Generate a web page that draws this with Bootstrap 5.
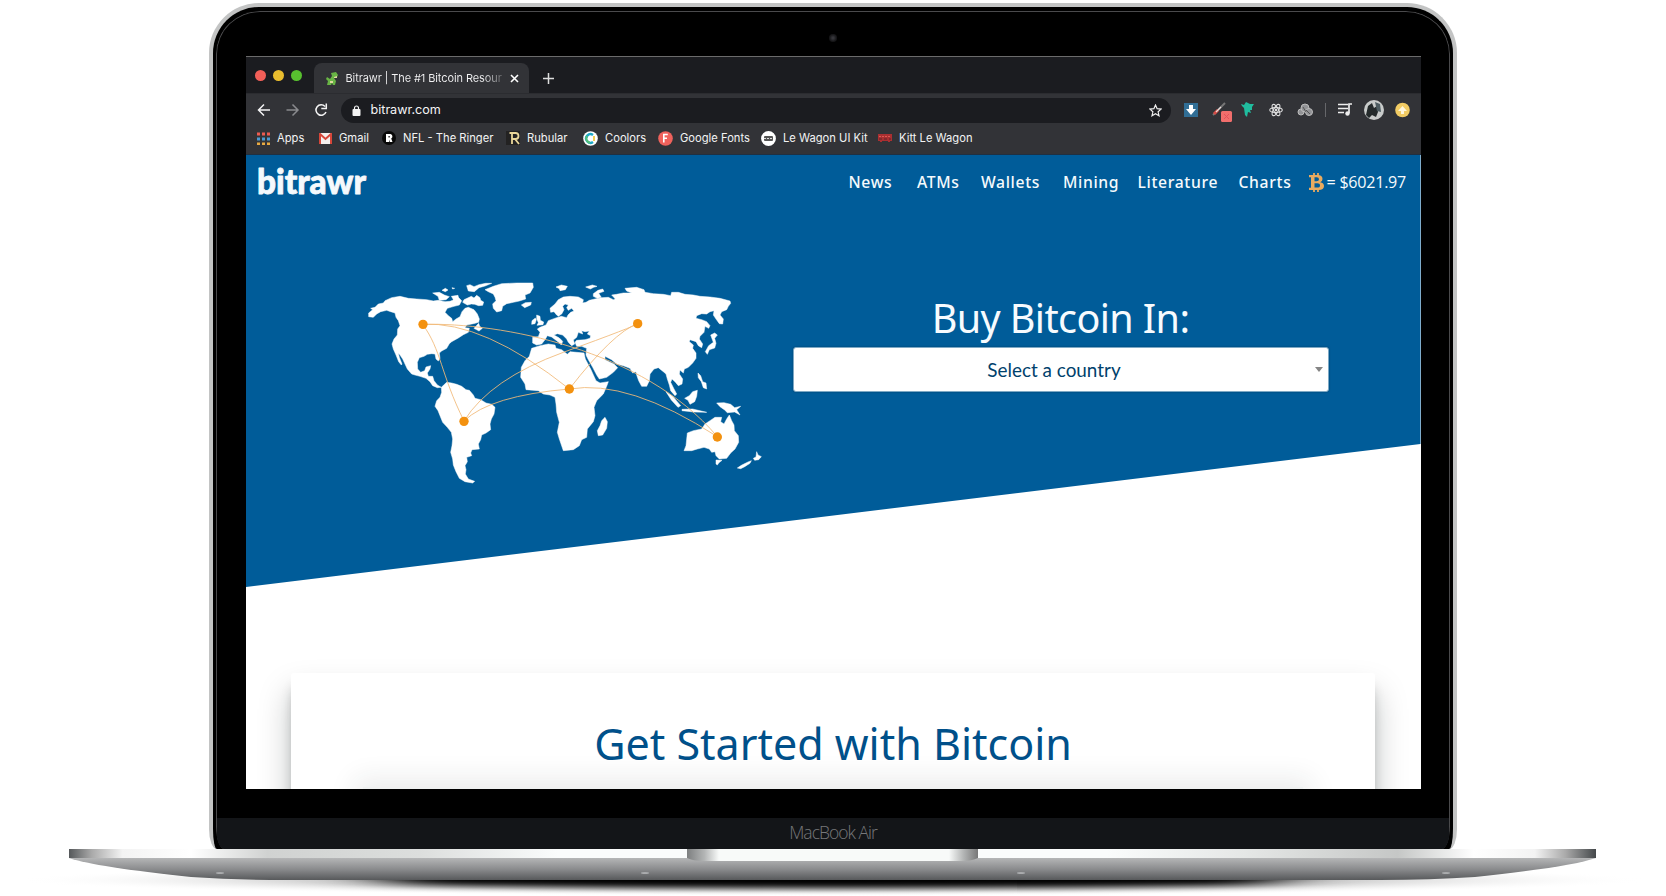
<!DOCTYPE html>
<html lang="en">
<head>
<meta charset="utf-8">
<title>Bitrawr on a laptop</title>
<meta name="viewport" content="width=device-width, initial-scale=1">
<link href="https://cdn.jsdelivr.net/npm/bootstrap@5.3.0/dist/css/bootstrap.min.css" rel="stylesheet">
<script src="https://cdn.jsdelivr.net/npm/bootstrap@5.3.0/dist/js/bootstrap.bundle.min.js" defer></script>
<style>
body{width:1666px;height:896px;background:#fff;font-family:Inter,"Liberation Sans",sans-serif}
svg{display:block;flex:none}
.lid{width:1248px;height:846px;margin-top:3px;border:4px solid #c3c4c4;border-bottom:0;border-radius:50px 50px 8px 8px / 50px 50px 20px 20px;background:#000}
.lid-edge{margin:1px 1px 0;height:841px;border:solid #000;border-width:3px 2px 0;border-radius:46px 46px 10px 10px / 46px 46px 22px 22px;overflow:hidden;box-shadow:inset 0 0 0 1px #4a4a4c}
.cam{width:8px;height:8px;border-radius:50%;background:radial-gradient(#35353a 15%,#161618 60%);margin:23px auto 14px}
.screen-area{width:1175px;height:733px;border-top:1px solid #6b6b6b}
.chin{height:31px;margin:29px 1px 0;background:#131518;color:#77787a;font:300 17.5px/29px "Open Sans",sans-serif;letter-spacing:-1px}
.tabs-row{height:36px;background:#1b1c20}
.light{width:11px;height:11px;border-radius:50%}
.page-tab{width:215px;height:30px;background:#323337;border-radius:8px 8px 0 0;color:#f1f1f2;font-size:11px;letter-spacing:-.1px;padding:0 10px 0 12px}
.tab-title{width:160px;white-space:nowrap;background:linear-gradient(90deg,#f4f4f5 85%,#6a6b6e 97%);-webkit-background-clip:text;background-clip:text;color:transparent}
.tools{height:33px;background:#323337;padding:0 10px 0 11px;border-top:1px solid #2b2c30}
.omni{width:830px;height:25px;border-radius:13px;background:#1b1c20;color:#f4f4f5;font-size:12.6px;padding:0 9px 0 11px}
.marks{height:29px;background:#323337;border-bottom:1px solid #1f3042;color:#f3f3f4;font-size:11.2px;font-weight:400;grid-template-columns:62px 63px 124px 77px 75px 103px 117px 120px;padding:2px 0 0 11px}
.marks div{display:flex;align-items:center;gap:7.500px;white-space:nowrap;height:20px}
.site{height:634px;background:#fff}
.hero{width:1175px;height:433px;background:#005c99;clip-path:polygon(0 0,100% 0,100% 289px,0 432px)}
.site-nav{height:54px;padding-left:8px}
.menu{grid-template-columns:68.5px 64px 82px 74.5px 101px 70px 112px;font:500 15.7px/24px "Noto Sans",sans-serif;letter-spacing:.65px;color:#f5fafd;white-space:nowrap}
.price{font:400 16.1px/24px "Open Sans",sans-serif;letter-spacing:-.25px}
.map{margin:60px 0 0 104px}
.buy{width:536px;margin:85px 0 0 13px}
.buy h1{font:400 39.5px/48px "Noto Sans",sans-serif;letter-spacing:-.6px;color:#f7fbfe;margin:0 0 5px}
.pick{height:45px;border:1px solid #7da8c4;border-radius:3px;background:#fff;color:#00416c;font:400 18.9px/43px Lato,sans-serif;box-shadow:0 0 2px #00416c}
.start{width:1084px;height:300px;margin:85px auto 0;background:#fff;border-radius:3px;box-shadow:0 20px 32px rgba(0,20,20,.25),0 12px 12px -4px rgba(0,10,10,.3);padding-top:43px}
.start h2{font:400 43px/56px "Noto Sans",sans-serif;color:#00508a;margin:0 0 15px}
.inner{width:940px;height:160px;background:#eff1f1;box-shadow:0 0 26px 8px rgba(30,40,40,.09)}
</style>
</head>
<body class="overflow-hidden m-0">
<div class="d-flex flex-column align-items-center">
<div class="lid"><div class="lid-edge">
  <div class="cam"></div>
  <div class="screen-area mx-auto overflow-hidden">
    <div class="tabs-row d-flex align-items-end">
      <div class="d-flex align-self-center" style="gap:7px;padding:0 0 0 9.500px;margin-right:11.500px">
        <span class="light" style="background:#f25f58"></span><span class="light" style="background:#e9bd2e"></span><span class="light" style="background:#58c02f"></span>
      </div>
      <div class="page-tab d-flex align-items-center">
        <svg width="12" height="13" viewBox="0 0 12 13"><path d="M5 1l5-1 2 3-1 2-3 1 2 3-1 4H7l-1-2-1 2H1L2 9 0 7l1-2 3 2 2-3z" fill="#69b445"/><path d="M8 5l3-1v2H8zM4 9h3v2H4z" fill="#ded8a0"/></svg>
        <span class="tab-title ms-2">Bitrawr | The #1 Bitcoin Resour</span>
        <svg class="ms-auto" width="9" height="9" viewBox="0 0 9 9"><path d="M1 1l7 7M8 1L1 8" stroke="#fff" stroke-width="1.6"/></svg>
      </div>
      <svg style="margin:0 0 9px 14px" width="11" height="11" viewBox="0 0 11 11"><path d="M0 5.500H11M5.500 0V11" stroke="#ddd" stroke-width="1.500"/></svg>
    </div>
    <div class="tools d-flex align-items-center">
      <svg width="84" height="14" viewBox="0 0 84 14" fill="none" stroke="#f4f4f4" stroke-width="1.500"><path d="M13 7H2M7 1.500L1.500 7 7 12.500"/><path stroke="#898a8d" d="M29.500 7h11M35.500 1.500L41 7l-5.500 5.500"/><path d="M68 3.500A5.200 5.200 0 1 0 69 9M69.300.5v5h-5"/></svg>
      <div class="omni d-flex align-items-center">
        <svg width="9" height="11" viewBox="0 0 9 11"><rect y="4" x=".5" width="8" height="7" rx="1" fill="#f4f4f4"/><path d="M2.500 5V3a2 2 0 0 1 4 0v2" fill="none" stroke="#f4f4f4" stroke-width="1.200"/></svg>
        <span style="margin-left:10px">bitrawr.com</span>
        <svg class="ms-auto" width="13" height="13" viewBox="0 0 13 13"><path d="M6.500 1l1.600 3.700 4 .4-3 2.700.9 3.900-3.500-2-3.500 2 .9-3.900-3-2.700 4-.4z" fill="none" stroke="#eee" stroke-width="1.200"/></svg>
      </div>
      <svg class="ms-auto" width="228" height="24" viewBox="0 0 228 24">
        <rect x="1" y="5" width="14" height="14" fill="#316e95"/><path d="M6 7h4v4h3l-5 6-5-6h3z" fill="#fff"/>
        <path d="M30 17L42 5" stroke="#777" stroke-width="2"/><path d="M31 16l4-4" stroke="#d64b45" stroke-width="3"/><path d="M33 14l5-5" stroke="#e8dcd8" stroke-width="1.300"/><rect x="38" y="13" width="11" height="11" rx="1.500" fill="#f16e6c"/><path d="M41 16l5 5M46 16l-5 5" stroke="#e2525a"/>
        <path d="M58 6l3 1 2-3 4 2 4 0-2 3 0 3-2 0 1 3-3-1-1 5-2-2-1-7-2-2z" fill="#20bd9f"/>
        <g fill="none" stroke="#ddd" stroke-width="1.100"><ellipse cx="93" cy="12" rx="6.300" ry="2.400"/><ellipse cx="93" cy="12" rx="6.300" ry="2.400" transform="rotate(60 93 12)"/><ellipse cx="93" cy="12" rx="6.300" ry="2.400" transform="rotate(120 93 12)"/></g><circle cx="93" cy="12" r="1.300" fill="#ddd"/>
        <g fill="#929396" stroke="#bbb"><circle cx="118" cy="14" r="3"/><circle cx="122" cy="10" r="4"/><circle cx="126" cy="14" r="3.500"/></g><path d="M123 12l4 4M120 9l3 5" stroke="#555"/>
        <path d="M142.500 5v14" stroke="#66676a"/>
        <path d="M155 6.500h10M155 10.500h10M155 14.500h6M166 15V6h3" stroke="#eee" stroke-width="1.700" fill="none"/><circle cx="164.500" cy="15.500" r="2.200" fill="#eee"/>
        <circle cx="191" cy="12" r="10" fill="#c8cbca"/><path d="M185 8l4-3 2 5 3-2 1 6-2 5-4-2-3 3-3-3z" fill="#242a2b"/><path d="M192 4l5 2 1 8-4-1z" fill="#4c5b60"/>
        <circle cx="219.500" cy="12" r="7.300" fill="#f2cc64"/><path d="M218 16v-3h-3l4.500-5 4.500 5h-3v3z" fill="#fff7dc"/>
      </svg>
    </div>
    <div class="marks d-grid align-items-start">
      <div><svg width="13" height="13" viewBox="0 0 13 13"><path d="M0 2h13" stroke="#ed5c50" stroke-width="3" stroke-dasharray="3 2"/><path d="M0 7h13" stroke="#4b9bd2" stroke-width="3" stroke-dasharray="3 2"/><path d="M0 12h13" stroke="#e8aa42" stroke-width="3" stroke-dasharray="3 2"/></svg>Apps</div>
      <div><svg width="13" height="11" viewBox="0 0 13 11"><rect width="13" height="11" rx="1" fill="#f3efed"/><path d="M1 11V1l5.500 5L12 1v10" fill="none" stroke="#d64639" stroke-width="2"/></svg>Gmail</div>
      <div><svg width="14" height="14" viewBox="0 0 14 14"><circle cx="7" cy="7" r="7" fill="#080808"/><path d="M4 3h4.500a2.500 2.500 0 0 1 .7 4.600L10.500 11H7.800L7 8.500V11H4zM6.500 5v1.500h1.200V5z" fill="#fff"/></svg>NFL - The Ringer</div>
      <div><svg width="14" height="14" viewBox="0 0 14 14"><path d="M0 0h14v14H0z" fill="#232222"/><path d="M6 13V2h3.500q3 0 3 3t-3 3H6m3 0l4 5M3.500 2H7" fill="none" stroke="#ead79a" stroke-width="1.800"/></svg>Rubular</div>
      <div><svg width="15" height="15" viewBox="0 0 15 15"><circle cx="7.500" cy="7.500" r="7.300" fill="#fff"/><path d="M10 4a4.300 4.300 0 1 0 0 7" fill="none" stroke="#20a9c5" stroke-width="2.500"/><path d="M4 5a4.300 4.300 0 0 0 3 6.700" fill="none" stroke="#55bf75" stroke-width="2"/><path d="M11 5v5" stroke="#f2cf52" stroke-width="2"/></svg>Coolors</div>
      <div><svg width="15" height="15" viewBox="0 0 15 15"><circle cx="7.500" cy="7.500" r="7.300" fill="#f0625c"/><path d="M5.800 11.500v-8h4M5.800 7.300H9" fill="none" stroke="#fff" stroke-width="1.600"/></svg>Google Fonts</div>
      <div><svg width="15" height="15" viewBox="0 0 15 15"><circle cx="7.500" cy="7.500" r="7.400" fill="#fff"/><rect x="3" y="5" width="9" height="5" rx="1" fill="#555"/><path d="M3 7.500h9" stroke="#ddd" stroke-dasharray="2 1"/></svg>Le Wagon UI Kit</div>
      <div><svg width="14" height="10" viewBox="0 0 14 10"><path d="M0 1h14v7h-2v1h-2V8H4v1H2V8H0z" fill="#a92f31"/><path d="M1 3.500h12" stroke="#dc5952" stroke-dasharray="2 1"/><path d="M1 6h12" stroke="#5d2428" stroke-dasharray="3 2"/></svg>Kitt Le Wagon</div>
    </div>
    <div class="site">
      <div class="hero">
        <nav class="site-nav d-flex align-items-center justify-content-between">
          <svg width="120" height="46" viewBox="-4 -6 120 46"><text x="-1" y="28.500" font-family="Lato" font-weight="900" font-size="34" fill="#f5f9fc" stroke="#f5f9fc" stroke-width=".8" stroke-linejoin="round" textLength="109" lengthAdjust="spacingAndGlyphs">bitrawr</text></svg>
          <div class="menu d-grid"><span>News</span><span>ATMs</span><span>Wallets</span><span>Mining</span><span>Literature</span><span>Charts</span>
            <span class="price d-flex align-items-center"><svg style="margin-right:3px" width="15" height="19" viewBox="0 0 15 19"><path d="M0 2h8.500q5 0 5 4 0 2.500-2.300 3.200Q15 10 15 13q0 4-5.500 4H0v-2.200h2V4.200H0zm5.500 2.300v3.900h2q2.500 0 2.500-2t-2.500-1.900zm0 6v4.300H8q3 0 3-2.200t-3-2.100z" fill="#e9ab60" fill-rule="evenodd"/><path d="M5 0v3M9 0v3M5 16v3M9 16v3" stroke="#e9ab60" stroke-width="1.800"/></svg>= $6021.97</span></div>
        </nav>
        <div class="d-flex">
        <svg class="map" width="430" height="225" viewBox="0 0 1290 675">
          <g fill="#fff" stroke="#fff" stroke-width="1.500" stroke-linejoin="round">
            <path d="M56 132L68 122 62 118 75 115 85 105 100 102 105 95 125 86 150 82 175 88 200 90 230 92 250 96 265 94 285 98 300 97 310 93 318 82 328 88 335 95 328 108 312 112 292 118 285 130 295 140 305 148 308 158 318 150 330 143 336 128 345 118 355 115 372 122 382 135 388 150 386 160 370 164 350 168 345 176 358 178 355 190 340 197 325 207 305 218 298 224 290 238 275 246 268 252 270 268 265 276 258 270 255 255 245 254 232 256 222 262 208 266 202 280 203 300 212 310 224 305 228 294 242 290 240 300 232 312 235 322 248 322 252 335 262 348 274 355 262 356 248 350 240 338 228 328 210 322 195 318 185 315 172 300 165 285 158 270 150 258 145 252 148 265 156 285 154 288 146 278 138 258 130 240 126 225 132 210 142 198 143 180 150 170 145 155 138 145 135 132 122 128 110 124 92 128 80 135 70 145 56 143z"/>
            <path d="M274 355L290 340 305 342 320 346 335 352 348 362 358 364 370 378 375 388 392 392 408 402 425 406 435 415 432 435 424 450 420 465 422 482 408 492 395 498 392 512 385 525 388 540 366 542 362 552 365 560 350 565 352 578 345 590 348 602 346 615 355 630 374 637 368 642 345 638 328 628 318 608 310 588 308 570 302 550 306 530 308 510 304 490 292 475 278 460 270 440 264 425 255 412 260 395 270 385 275 370z"/>
            <path d="M405 62L430 52 455 44 500 42 548 42 550 55 540 72 525 78 527 90 508 96 490 100 470 104 458 112 455 125 440 129 430 118 428 105 438 95 435 85 430 75 415 68z"/>
            <path d="M248 72l20-2 15 8 15 5-10 9-20 2-4-12zM276 64l10-6 8 5-8 5zM304 82l20-3 2 10-15 4zM306 56l8 2-6 2zM350 50l10-3 12 6 15-6 20-4 18 0-20 8-18 5-14 12-18-2zM338 100l4-8 22-10 8 5 8-8 10 7 2 8 9 5-3 10-12 1-12-4-10-1-12 3zM372 178l14-15 3 9 8 6-10 8zM514 108l12-7 18-1-2 8-18 8zM560 138l10 4 1 12 10 5-2 8-18 2 4-8-5-12zM546 155l10-8 3 5-4 12-10 2zM618 54l16-6 18 4-6 10-16 3-2-6z"/>
            <g transform="translate(600)">
            <path d="M-52 205L-35 203-30 190-38 180-30 175-12 168-5 155 20 146 34 142 50 146 54 138 62 130 72 126 65 118 55 124 50 116 55 108 45 105 38 112 42 122 35 135 25 142 20 138 12 128 2 130 0 118 15 105 25 92 40 84 60 82 85 84 100 92 98 102 108 100 118 94 135 90 155 86 175 85 190 92 196 90 185 78 200 76 220 72 245 72 230 66 225 58 260 55 282 62 285 70 310 74 340 76 362 80 365 70 385 70 405 76 430 78 450 82 480 84 510 88 540 96 542 103 535 112 530 122 515 128 510 138 520 150 518 165 508 164 498 150 490 138 492 125 480 128 470 135 455 134 440 140 438 148 455 152 470 158 480 170 476 178 465 172 462 190 450 202 448 210 458 225 455 236 445 230 438 218 420 212 418 218 430 228 428 238 438 252 438 268 428 282 415 295 403 300 400 312 390 303 388 315 398 330 396 345 385 350 375 338 366 330 362 340 372 360 380 375 375 380 362 365 358 348 352 330 348 315 340 308 325 296 312 300 300 315 298 335 290 352 275 352 266 335 260 318 258 308 248 312 240 298 220 290 200 285 185 272 165 262 165 272 180 280 192 285 203 296 190 310 170 325 148 330 140 318 128 295 115 272 108 258 110 238 95 232 80 232 75 220 80 214 105 212 120 208 122 200 112 195 118 186 105 188 95 185 98 195 85 190 80 205 70 213 74 225 65 230 55 220 50 210 38 198 22 194 12 198 28 207 38 217 34 228 24 218 5 204-8 200-15 212-25 225-40 228-52 222z"/>
            <path d="M-55 238L-30 230-5 225 15 228 18 238 35 242 52 256 60 248 80 250 102 252 106 270 122 300 138 335 150 342 175 338 170 352 160 375 140 395 132 415 135 440 130 458 112 480 110 505 95 512 88 530 70 542 40 545 28 510 22 490 28 460 20 430 18 405 15 385 0 378-20 375-35 365-72 362-75 345-88 325-86 295-75 275-62 262z"/>
            <path d="M165 445l7 13-2 20-12 20-13 2-3-15 8-15 5-15zM402 545L408 530 412 492 430 485 455 480 465 465 480 455 495 445 515 445 512 458 522 465 530 450 538 438 545 455 552 468 553 485 565 500 566 520 555 540 542 552 530 568 508 570 498 560 495 548 485 550 478 540 462 535 442 540 425 545zM498 573l18 1-10 8-4 6-4-3zM562 597l12-8 20-10 10-4-4 8-16 10-12 6zM620 548l4 10 10 5-8 9-12 2-4-6 8-4zM500 402l22-1 20 5 12 10 18-4-12 10 10 16-16-9-22 2-8-8-14-10zM404 388l14-8 10-12 14-4-2 18-6 16-14 8-6-12zM348 368l20 14 24 28-8 5-20-22zM396 421l32-1 42 10-38-1-36-4zM444 312l8 8 6 18 10 4 2 18-10-4-6-18-9-12zM482 198l12-6 8 6-8 10 4 15-4 14-16 5-6 14-6-8 10-18 14-10zM107 54l20-6 14 4-10 3-10 5zM130 74l14-10 14-4 4 7-16 6 8 12-12 3-12-6z"/>
            </g>
          </g>
          <path d="M218 166C450 160 880 240 1102 503M218 166Q400 155 658 360M218 166C275 245 270 310 342 456M342 456Q420 330 640 250T863 164M342 456Q420 380 658 360M658 360Q790 190 863 164M658 360Q835 330 1102 503" stroke="#f1b979" stroke-width="2.600" fill="none"/>
          <g fill="#f3910f"><circle cx="219" cy="166" r="14"/><circle cx="342" cy="457" r="14"/><circle cx="658" cy="360" r="14"/><circle cx="863" cy="164" r="14"/><circle cx="1102" cy="504" r="14"/></g>
        </svg>
        <div class="buy text-center"><h1>Buy Bitcoin In:</h1>
          <div class="pick d-flex align-items-center"><span class="flex-grow-1">Select a country</span><svg style="margin-right:5px" width="8" height="6" viewBox="0 0 8 6"><path d="M0 0h8L4 5z" fill="#858585"/></svg></div>
        </div></div>
      </div>
      <div class="start text-center"><h2>Get Started with Bitcoin</h2><div class="inner mx-auto"></div></div>
    </div>
  </div>
  <div class="chin text-center">MacBook Air</div>
</div></div>
<svg width="1666" height="47" viewBox="0 0 1666 47">
  <defs>
    <linearGradient id="rim"><stop stop-color="#55585a"/><stop offset=".015" stop-color="#aaa"/><stop offset=".035" stop-color="#f3f3f3"/><stop offset=".08" stop-color="#fff"/><stop offset=".13" stop-color="#d0d2d1"/><stop offset=".23" stop-color="#dcdedd"/><stop offset=".32" stop-color="#fafcfc"/><stop offset=".68" stop-color="#fafcfc"/><stop offset=".77" stop-color="#e5e7e6"/><stop offset=".87" stop-color="#c5c7c6"/><stop offset=".92" stop-color="#fff"/><stop offset=".96" stop-color="#f3f3f3"/><stop offset=".98" stop-color="#aaa"/><stop offset="1" stop-color="#44484a"/></linearGradient>
    <linearGradient id="belly" x2="0" y2="1"><stop stop-color="#b5b6b7"/><stop offset=".5" stop-color="#8b8c8e"/><stop offset="1" stop-color="#57595b"/></linearGradient>
    <linearGradient id="notch"><stop stop-color="#7d7f80"/><stop offset=".06" stop-color="#b3b5b5"/><stop offset=".11" stop-color="#f8faf9"/><stop offset=".9" stop-color="#f8faf9"/><stop offset=".95" stop-color="#b3b5b5"/><stop offset="1" stop-color="#777"/></linearGradient>
    <radialGradient id="far"><stop stop-color="#555" stop-opacity=".8"/><stop offset=".65" stop-color="#888" stop-opacity=".35"/><stop offset="1" stop-color="#fff" stop-opacity="0"/></radialGradient>
    <filter id="soft" x="-10%" y="-100%" width="120%" height="300%"><feGaussianBlur stdDeviation="35 3"/></filter>
  </defs>
  <ellipse cx="833" cy="31" rx="820" ry="16" fill="url(#far)"/>
  <path d="M340 20H1326L1260 36Q833 41 406 36z" fill="#000" filter="url(#soft)"/>
  <path d="M69 9H1596Q1570 18 1475 28Q1430 31 1380 31H286Q236 31 191 28Q96 18 69 9z" fill="url(#belly)"/>
  <path d="M69 0H1596V9H69z" fill="url(#rim)"/>
  <path d="M687 0H978V9Q972 12 962 12H703Q693 12 687 9z" fill="url(#notch)"/>
  <g fill="#aaacae"><ellipse cx="220" cy="24" rx="4" ry="1"/><ellipse cx="645" cy="24" rx="4" ry="1"/><ellipse cx="1021" cy="24" rx="4" ry="1"/><ellipse cx="1446" cy="24" rx="4" ry="1"/></g>
</svg>
</div>
</body>
</html>
